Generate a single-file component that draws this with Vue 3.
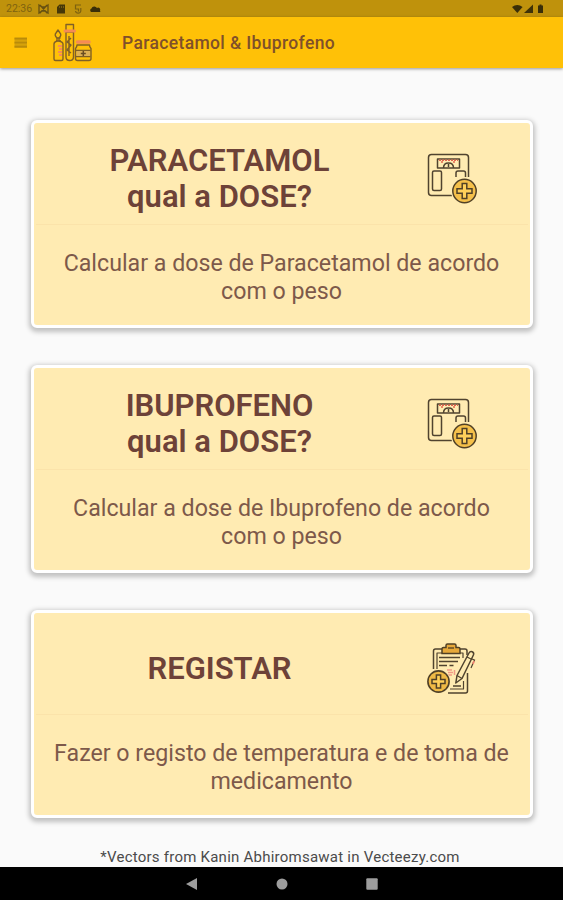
<script setup>
const cards = [
  { id: 'paracetamol', title: ['PARACETAMOL', 'qual a DOSE?'], text: ['Calcular a dose de Paracetamol de acordo', 'com o peso'], icon: 'scale' },
  { id: 'ibuprofeno', title: ['IBUPROFENO', 'qual a DOSE?'], text: ['Calcular a dose de Ibuprofeno de acordo', 'com o peso'], icon: 'scale' },
  { id: 'registar', title: ['REGISTAR'], text: ['Fazer o registo de temperatura e de toma de', 'medicamento'], icon: 'clipboard' },
]
</script>

<template>
  <div class="screen">
    <div class="status">
      <span class="time">22:36</span>
      <svg class="status-left" width="64" height="12" viewBox="0 0 64 12">
        <path d="M1 2l3 2h3l3-2v8l-3-2H4l-3 2zM2 2l7 8M9 2l-7 8" fill="none" stroke="#665011" stroke-width="1.3" />
        <path d="M21.500 1.500H27v9h-8V4z" fill="#453708" />
        <path d="M21.500 3v2M23.500 3v2M25.500 3v2" stroke="#8d6d0e" stroke-width=".7" />
        <path d="M43 2h-5.500v4h3v2.500M37.500 8a2.700 2.700 0 0 0 5.300 0V5" fill="none" stroke="#7d610f" stroke-width="1.200" />
        <path d="M53 9a2 2 0 0 1 .5-3.500 3 3 0 0 1 5.500-.5 2 2 0 0 1 3 2.500 1 1 0 0 1 0 1.500z" fill="#3a2e08" />
      </svg>
      <svg class="status-right" width="34" height="12" viewBox="0 0 34 12">
        <path d="M0 4q5.300-4 10.600 0L5.300 10z" fill="#3a2e08" />
        <path d="M21 1.500V10h-9z" fill="#3f3208" />
        <path d="M27.500 1.500h2v1H31V10h-5V2.500h1.500z" fill="#3a2e08" />
      </svg>
    </div>

    <header class="bar">
      <svg class="menu" width="14" height="12" viewBox="0 0 14 12">
        <path d="M.5.500h12.500v10.500H.5z" fill="#d6a20a" />
        <path d="M.5 1.700h12.500M.5 5.700h12.500M.5 9.700h12.500" stroke="#b98b09" stroke-width="1.700" />
      </svg>
      <svg class="logo" width="42" height="42" viewBox="0 0 42 42">
        <g fill="none" stroke="#806027" stroke-width="1.400" stroke-linejoin="round">
          <path d="M2 37V22q0-2 3-3v-3q-3-3-1-5l2-3 2 3q2 2-1 5v3q4 1 4 3v15q0 1.500-1.500 1.500h-6Q2 38.500 2 37z" />
          <path d="M4.500 16h4M4 19h5" />
          <path d="M14 8V2.500h7.500V8M14 10v25q0 3.500 3.700 3.500t3.800-3.500V10z" />
          <path d="M25 23q0 2-1.500 3.500v10q0 2 2 2h11.500q2 0 2-2v-10Q37.500 25 37.500 23z" />
          <path d="M24 28.500h14.500M24 34.500h14.500" />
          <path d="M19 16l-4 4 4 3-4 5 4 3M17 14v20" />
        </g>
        <g fill="none" stroke="#f58b55">
          <path d="M13 9h9.500" stroke-width="3" stroke-linecap="round" />
          <path d="M25.500 20h11.500" stroke-width="3.500" stroke-linecap="round" />
          <path d="M6 24h4M7 27h3M6 30h4M7 33h3" stroke-width="1.800" />
        </g>
        <path d="M24.500 29h13.500v5H24.500z" fill="#ddb056" />
        <path d="M31.300 29v5M28.800 31.500h5" stroke="#6a4d22" stroke-width="1.500" />
      </svg>
      <h1>Paracetamol &amp; Ibuprofeno</h1>
    </header>

    <main>
      <section v-for="card in cards" :key="card.id" class="card">
        <div class="head">
          <h2><span v-for="line in card.title" :key="line">{{ line }}</span></h2>
          <svg v-if="card.icon === 'scale'" class="icon" width="52" height="52" viewBox="0 0 52 52">
            <g fill="none" stroke="#50432f" stroke-width="1.500" stroke-linejoin="round">
              <path d="M26 42.500H5.500q-3 0-3-3v-35q0-3 3-3h34q3 0 3 3V24" />
              <path d="M11.500 6h22v9h-22z" />
              <path d="M17.500 15q0-5 5-5t5 5M22.500 11v3" />
              <rect x="6.500" y="18" width="9" height="19.500" rx="1.500" />
              <path d="M30 24v-4q0-2 2-2h5.500q2 0 2 2v4" />
            </g>
            <path d="M13 7.300h19M15 9h3M27 9h3" fill="none" stroke="#e4654f" stroke-width="1.500" stroke-dasharray="2 1" />
            <circle cx="38.500" cy="38" r="13.500" fill="#ffebb2" />
            <circle cx="38.500" cy="38" r="11.700" fill="#f5c04a" stroke="#504026" stroke-width="1.500" />
            <path d="M36.200 30.500h4.600v5.200H46v4.600h-5.200v5.200h-4.600v-5.200H31v-4.600h5.200z" fill="#ffd05a" stroke="#504026" stroke-width="1.500" />
          </svg>
          <svg v-else class="icon" width="52" height="52" viewBox="0 0 52 52">
            <g fill="none" stroke="#50432f" stroke-width="1.500" stroke-linejoin="round">
              <path d="M7.500 26V8q0-2 2-2H16M34 6h5q2 0 2 2v4M41.500 30v18q0 2-2 2H22" />
              <path d="M11 26V10h6M33 10h4v5M37.500 38v8H24" stroke-width="1.200" />
              <path d="M13 14.500h21M13 18.500h19M13 22.500h8M23.500 22.500h4M27 43h8" />
            </g>
            <path d="M16 10.500V6q0-1.500 1.500-1.500H20V2.500q0-1.500 1.500-1.500h7q1.500 0 1.500 1.500v2h2.500Q34 4.500 34 6v4.500z" fill="#e6a83a" stroke="#504026" stroke-width="1.500" />
            <path d="M22 5h6" stroke="#504026" stroke-width="1.300" />
            <path d="M21 27h5M22 29.500h5M21 32h5M28.500 27v5" stroke="#f29a86" stroke-width="1.500" />
            <path d="M31 32.500L43 10q1.200-2.200 3.200-1.300 2.200 1 1.200 3.300L36 35.500 29.800 40z" fill="#ffebb2" stroke="#50432f" stroke-width="1.500" stroke-linejoin="round" />
            <path d="M31 32.500l5 3M41 14l5 2.500M46 16l2.500 1-3.500 8" fill="none" stroke="#50432f" stroke-width="1.200" />
            <path d="M48 18l-1 3" stroke="#ee806e" stroke-width="1.800" />
            <circle cx="12.500" cy="38.500" r="12" fill="#ffebb2" />
            <circle cx="12.500" cy="38.500" r="10.600" fill="#efb945" stroke="#504026" stroke-width="1.600" />
            <path d="M10.400 32h4.200v4.400H19v4.200h-4.400V45h-4.200v-4.400H6v-4.200h4.400z" fill="#ffd05a" stroke="#504026" stroke-width="1.500" />
          </svg>
        </div>
        <p><span v-for="line in card.text" :key="line">{{ line }}</span></p>
      </section>
      <footer>*Vectors from Kanin Abhiromsawat in Vecteezy.com</footer>
    </main>

    <nav class="nav">
      <svg width="12" height="14" viewBox="0 0 12 14"><path d="M11 1v12L0 7z" fill="#9d9d9d" /></svg>
      <svg width="12" height="14" viewBox="0 0 12 14"><circle cx="6" cy="7" r="5.500" fill="#9d9d9d" /></svg>
      <svg width="12" height="14" viewBox="0 0 12 14"><rect x=".3" y="1.300" width="11.400" height="11.400" rx="1" fill="#9d9d9d" /></svg>
    </nav>
  </div>
</template>

<style>
body {
  margin: 0;
}
</style>

<style scoped>
.screen {
  width: 563px;
  height: 900px;
  display: flex;
  flex-direction: column;
  overflow: hidden;
  background: #fafafa;
  font-family: Roboto, sans-serif;
}
.status {
  flex: none;
  height: 17px;
  box-sizing: border-box;
  display: flex;
  align-items: center;
  padding: 1px 17px 0 6px;
  background: #bf920c;
}
.time {
  width: 32px;
  font-size: 10.5px;
  line-height: 12px;
  color: #80630f;
}
.status-right {
  margin-left: auto;
}
.bar {
  flex: none;
  height: 51px;
  display: flex;
  align-items: center;
  background: #ffc107;
  box-shadow: 0 1px 3px rgba(0, 0, 0, 0.4);
}
.menu {
  margin-left: 14px;
}
.logo {
  margin-left: 24px;
}
h1 {
  margin: 0 0 0 28px;
  font-size: 17.5px;
  font-weight: 500;
  line-height: 24px;
  letter-spacing: 0.36px;
  color: #80502a;
}
main {
  flex: 1;
  display: flex;
  flex-direction: column;
  align-items: center;
  gap: 37px;
  padding-top: 52px;
}
.card {
  flex: none;
  width: 502px;
  height: 208px;
  box-sizing: border-box;
  border: 3px solid #fff;
  border-radius: 6px;
  background: #ffebb2;
  box-shadow: 0 2px 5px 2px rgba(0, 0, 0, 0.23);
}
.head {
  height: 101px;
  display: flex;
  align-items: center;
  border-bottom: 1px solid #fbe3aa;
  margin: 0 2px;
}
h2 {
  width: 372px;
  margin: 11px 2px 0 -2px;
  font-size: 31px;
  font-weight: 600;
  line-height: 36.5px;
  text-align: center;
  color: #6d4238;
}
h2 span,
p span {
  display: block;
  white-space: nowrap;
}
.icon {
  flex: none;
  margin: 10px 0 0 18px;
}
p {
  margin: 25px 0 0;
  font-size: 23.2px;
  font-weight: 400;
  line-height: 27.5px;
  text-align: center;
  color: #7d594a;
}
footer {
  margin-top: -8px;
  font-size: 15px;
  line-height: 20px;
  letter-spacing: 0.24px;
  color: #4b4b4b;
  white-space: nowrap;
  margin-right: 3px;
}
.nav {
  flex: none;
  height: 33px;
  display: flex;
  align-items: center;
  justify-content: center;
  gap: 78px;
  background: #000;
}
</style>
